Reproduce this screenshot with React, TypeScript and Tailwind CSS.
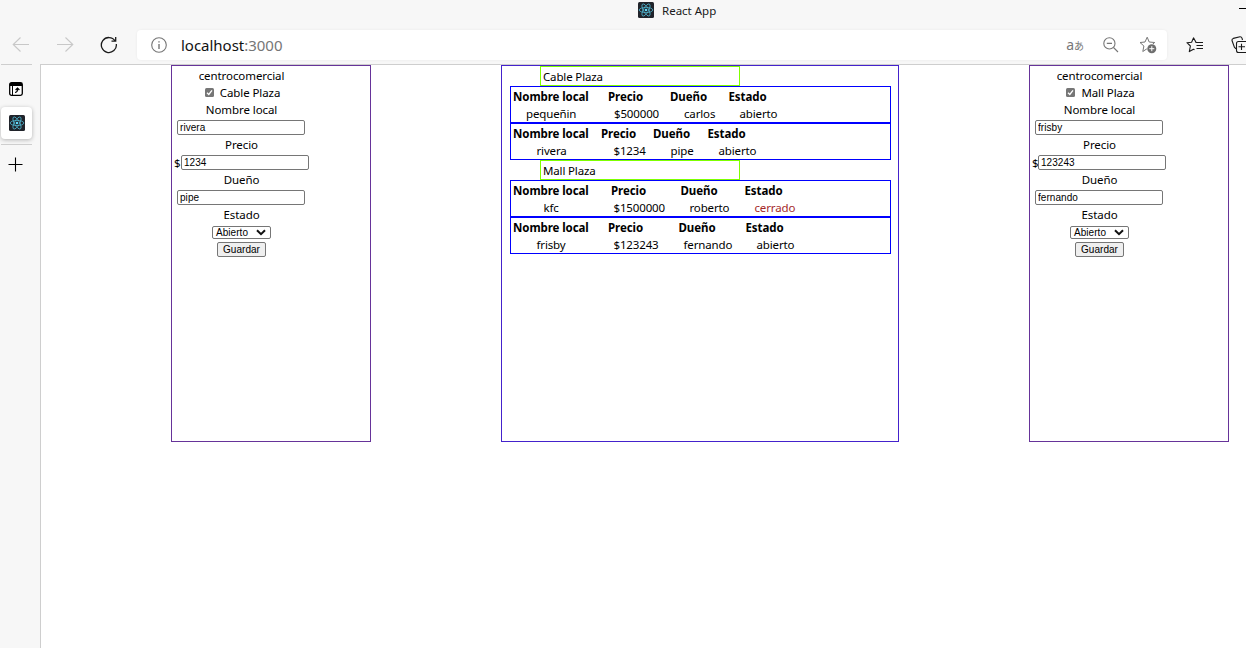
import React from "react";

function ReactLogo() {
  return (
    <svg className="block size-4 shrink-0" viewBox="0 0 16 16" fill="none">
      <rect width="16" height="16" rx="1.5" fill="#20232a" />
      <g stroke="#4fb3cc" strokeWidth="0.8">
        <ellipse cx="8" cy="8" rx="6.8" ry="2.6" />
        <ellipse cx="8" cy="8" rx="6.8" ry="2.6" transform="rotate(60 8 8)" />
        <ellipse cx="8" cy="8" rx="6.8" ry="2.6" transform="rotate(120 8 8)" />
      </g>
      <circle cx="8" cy="8" r="1.3" fill="#61dafb" />
    </svg>
  );
}

function TopBar() {
  return (
    <header className="h-[64px] w-full overflow-hidden bg-[#f7f7f7]">
      <div className="flex h-[29px] items-start pt-[2px] pl-[638px]">
        <ReactLogo />
        <span className="ml-2 text-[11.5px] leading-[18px] whitespace-nowrap text-[#1a1a1a]">React App</span>
        <svg className="mt-[5px] ml-auto block" width="7" height="3" viewBox="0 0 7 3">
          <path d="M0 1.5H7" stroke="#000" />
        </svg>
      </div>
      <div className="flex h-[32px] items-center">
        <svg className="ml-[12px] shrink-0" width="18" height="18" viewBox="0 0 18 18" fill="none" stroke="#c8c8c8" strokeWidth="1.1">
          <path d="M17 8.5H1M8.5 1.5L1.2 8.5L8.5 15.5" />
        </svg>
        <svg className="ml-[26px] shrink-0" width="18" height="18" viewBox="0 0 18 18" fill="none" stroke="#c8c8c8" strokeWidth="1.1">
          <path d="M1 8.5H17M9.5 1.5L16.8 8.5L9.5 15.5" />
        </svg>
        <svg className="ml-[26px] shrink-0" width="18" height="18" viewBox="0 0 18 18" fill="none" stroke="#1a1a1a" strokeWidth="1.3">
          <path d="M16.3 8A7.5 7.5 0 1 1 15.2 5M15.7 1V5.2H11.5" />
        </svg>
        <div className="ml-[19px] flex h-[30px] w-[1030px] shrink-0 items-center rounded bg-white shadow-[0_0_3px_rgba(0,0,0,0.06)]">
          <svg className="ml-[14px] shrink-0" width="16" height="16" viewBox="0 0 16 16" fill="none" stroke="#767676">
            <circle cx="8" cy="8" r="7.3" strokeWidth="1.1" />
            <path d="M8 7V12M8 4.2V5.6" strokeWidth="1.4" />
          </svg>
          <span className="ml-[14px] text-[15px] tracking-[-0.02px] text-[#111]">
            localhost<span className="text-[#767676]">:3000</span>
          </span>
          <span className="mr-[19px] ml-auto flex items-baseline whitespace-nowrap text-[#777]">
            <span className="text-[14px] leading-4">a</span>
            <span className="font-['Noto_Sans_CJK_JP',sans-serif] text-[10px] leading-4">あ</span>
          </span>
          <svg className="mr-[20px] shrink-0" width="16" height="16" viewBox="0 0 16 16" fill="none" stroke="#767676" strokeWidth="1.1">
            <circle cx="6.4" cy="6.4" r="5.6" />
            <path d="M3.8 6.4H9M10.5 10.5L15 15" />
          </svg>
          <svg className="mr-[10px] shrink-0" width="18" height="18" viewBox="0 0 18 18" fill="none">
            <path d="M8.2 1.2L10.2 6L15.7 6.5L11.6 10L12.5 15L8.2 12.6L3.8 15.5L4.9 10L1 6.5L6 6Z" stroke="#767676" strokeLinejoin="round" />
            <circle cx="12.8" cy="12.7" r="5" fill="#fff" />
            <circle cx="12.8" cy="12.7" r="4.5" fill="#6e6e6e" />
            <path d="M12.8 10.2V15.2M10.3 12.7H15.3" stroke="#fff" />
          </svg>
        </div>
        <svg className="ml-[19px] shrink-0" width="18" height="16" viewBox="0 0 18 16" fill="none" stroke="#1a1a1a" strokeWidth="1.1">
          <path d="M10 5.2L7.5 .9L5.6 5.2L.9 5.7L4.4 9L3.3 14.6L7.5 12.2L8.5 12.8" strokeLinejoin="round" />
          <path d="M9.5 5.5H17M10.5 8.5H17M10.5 11.5H17" />
        </svg>
        <svg className="ml-[27px] shrink-0" width="15" height="18" viewBox="0 0 15 18" fill="none" stroke="#1a1a1a" strokeWidth="1.1">
          <path d="M5 12.8L3.4 11.2L1 4.5Q.7 3 2.3 2.4L9 .8Q10.5.7 11 2.2L11.5 4" />
          <rect x="5.5" y="5.5" width="11" height="11" rx="2" />
          <path d="M10.5 7.8V14M7.5 10.8H14" />
        </svg>
      </div>
    </header>
  );
}

function SideBar() {
  return (
    <aside className="flex w-[40px] shrink-0 flex-col bg-[#f7f7f7]">
      <div className="ml-px h-px w-[31px] bg-[#cecece]" />
      <svg className="mt-[17px] ml-[9px] block" width="14" height="14" viewBox="0 0 14 14" fill="none">
        <rect x=".7" y=".7" width="12.6" height="12.6" rx="1.8" fill="#fff" stroke="#000" strokeWidth="1.3" />
        <path d="M1 1H13V4H1Z" fill="#000" />
        <path d="M3.5 4V13" stroke="#000" />
        <path d="M6 10.5C8.3 10.4 8.6 8.8 8.5 6.5M6.6 8L8.5 6L10.4 8" stroke="#000" strokeWidth="1.2" />
      </svg>
      <div className="mt-[11px] ml-px flex h-[32px] w-[31px] items-center rounded bg-white pl-[8px] shadow-[0_1px_4px_rgba(0,0,0,0.28)]">
        <ReactLogo />
      </div>
      <div className="mt-[5px] ml-px h-px w-[31px] bg-[#cecece]" />
      <svg className="mt-[12px] ml-[8px] block" width="15" height="15" viewBox="0 0 15 15">
        <path d="M7.5 .5V14.5M.5 7.5H14.5" stroke="#000" strokeWidth="1.1" />
      </svg>
    </aside>
  );
}

interface FormProps {
  mall: string;
  local: string;
  price: string;
  owner: string;
  signWidth: string;
}

const field =
  "block h-[15px] w-[128px] rounded-[2px] border border-[#767676] bg-white px-[2px] font-['Liberation_Sans',sans-serif] text-[10px] tracking-[0.05px] text-black outline-none";

function StoreForm({ mall, local, price, owner, signWidth }: FormProps) {
  return (
    <form className="h-[377px] w-[200px] shrink-0 border border-[#663399] pt-px text-[11.5px] leading-[17px] tracking-[-0.08px]">
      <div className="flex w-[139px] flex-col items-center">
        <div>centrocomercial</div>
        <label className="flex h-[17px] items-center pl-[2px]">
          <span className="mr-[6px] flex size-[9px] items-center justify-center rounded-[1.5px] bg-[#767676]">
            <svg width="9" height="9" viewBox="0 0 9 9" fill="none">
              <path d="M2 4.8L3.8 6.5L7 2.4" stroke="#fff" strokeWidth="1.3" />
            </svg>
          </span>
          {mall}
        </label>
        <div>Nombre local</div>
        <div className="flex h-[18px] items-center self-start pl-[5px]">
          <input className={field} defaultValue={local} />
        </div>
        <div>Precio</div>
        <div className="flex h-[18px] items-center self-start pl-[2px]">
          <span className={signWidth}>$</span>
          <input className={field} defaultValue={price} />
        </div>
        <div>Dueño</div>
        <div className="flex h-[18px] items-center self-start pl-[5px]">
          <input className={field} defaultValue={owner} />
        </div>
        <div>Estado</div>
        <button
          type="button"
          className="mt-[3px] flex h-[13px] w-[59px] items-center justify-between rounded-[2px] border border-[#767676] bg-white pr-[4px] pl-[3px] font-['Liberation_Sans',sans-serif] text-[10px] leading-[11px] tracking-[0.05px]"
        >
          Abierto
          <svg width="10" height="7" viewBox="0 0 10 7" fill="none">
            <path d="M1 1.2L5 5.2L9 1.2" stroke="#111" strokeWidth="2" />
          </svg>
        </button>
        <button
          type="button"
          className="mt-[3px] h-[15px] w-[49px] rounded-[2px] border border-[#767676] bg-[#efefef] text-center font-['Liberation_Sans',sans-serif] text-[10px] leading-[13px] tracking-[0.05px]"
        >
          Guardar
        </button>
      </div>
    </form>
  );
}

interface RowProps {
  heads: string[];
  cells: string[];
  values: string[];
  closed?: boolean;
}

const titles = ["Nombre local", "Precio", "Dueño", "Estado"];

function StoreRow({ heads, values, cells, closed }: RowProps) {
  return (
    <div className="ml-[8px] h-[37px] w-[381px] border border-[#0000ff] pt-px whitespace-nowrap">
      <div className="flex font-bold tracking-[-0.08px]">
        {titles.map((t, i) => (
          <span key={t} className={heads[i]}>{t}</span>
        ))}
      </div>
      <div className="flex">
        {values.map((v, i) => (
          <span key={v} className={`${cells[i]} ${closed && i === 3 ? "text-[#a52a2a]" : ""}`}>{v}</span>
        ))}
      </div>
    </div>
  );
}

function MallName({ children }: { children: React.ReactNode }) {
  return <div className="ml-[38px] h-[20px] w-[200px] border border-[#7fff00] pl-[2px] leading-[19px]">{children}</div>;
}

function StoreList() {
  return (
    <section className="h-[377px] w-[398px] shrink-0 border border-[#4422cc] text-[11.5px] leading-[17px] tracking-[-0.15px]">
      <MallName>Cable Plaza</MallName>
      <StoreRow
        heads={["ml-[2px] w-[95px]", "w-[62px]", "w-[58.5px]", ""]}
        cells={["ml-[15px] w-[88px]", "w-[70px]", "w-[55.5px]", ""]}
        values={["pequeñin", "$500000", "carlos", "abierto"]}
      />
      <StoreRow
        heads={["ml-[2px] w-[88px]", "w-[52px]", "w-[54.5px]", ""]}
        cells={["ml-[25.5px] w-[77px]", "w-[57px]", "w-[48px]", ""]}
        values={["rivera", "$1234", "pipe", "abierto"]}
      />
      <MallName>Mall Plaza</MallName>
      <StoreRow
        heads={["ml-[2px] w-[98px]", "w-[69.5px]", "w-[64px]", ""]}
        cells={["ml-[32.5px] w-[70px]", "w-[76px]", "w-[65px]", ""]}
        values={["kfc", "$1500000", "roberto", "cerrado"]}
        closed
      />
      <StoreRow
        heads={["ml-[2px] w-[95px]", "w-[70.5px]", "w-[67px]", ""]}
        cells={["ml-[25.5px] w-[77px]", "w-[70px]", "w-[73px]", ""]}
        values={["frisby", "$123243", "fernando", "abierto"]}
      />
    </section>
  );
}

export default function App() {
  return (
    <div className="flex h-[648px] w-[1246px] flex-col overflow-hidden bg-[#f7f7f7] font-['Noto_Sans',sans-serif] text-black">
      <TopBar />
      <div className="flex min-h-0 flex-1">
        <SideBar />
        <main className="flex flex-1 items-start border-t border-l border-[#cecece] bg-white pl-[130px]">
          <StoreForm mall="Cable Plaza" local="rivera" price="1234" owner="pipe" signWidth="w-[7px]" />
          <div className="w-[130px] shrink-0" />
          <StoreList />
          <div className="w-[130px] shrink-0" />
          <StoreForm mall="Mall Plaza" local="frisby" price="123243" owner="fernando" signWidth="w-[6px]" />
        </main>
      </div>
    </div>
  );
}
